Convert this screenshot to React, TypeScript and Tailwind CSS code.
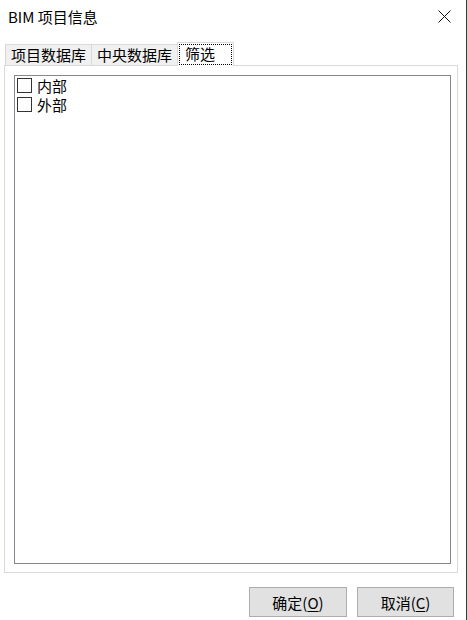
import React from "react";

const font = { fontFamily: '"Noto Sans CJK SC", "Noto Sans", sans-serif' };

function Checkbox({ label }: { label: string }) {
  return (
    <label className="flex items-center h-[19px] pl-[2px]">
      <span className="w-[15px] h-[15px] border border-[#333333] bg-white shrink-0" />
      <span className="ml-[5px] text-[15px] leading-none text-[#000]">{label}</span>
    </label>
  );
}

export default function App() {
  const tabs = ["项目数据库", "中央数据库", "筛选"];
  const active = 2;

  return (
    <div
      className="w-[467px] h-[620px] bg-white border-r border-[#3a3a3a] flex flex-col overflow-hidden select-none"
      style={font}
    >
      {/* title bar */}
      <div className="h-[32px] flex items-center justify-between pl-[8px] pr-[15px]">
        <span className="text-[15px] text-black leading-none">BIM 项目信息</span>
        <svg width="13" height="13" viewBox="0 0 13 13">
          <path d="M0.5 0.5 L12.5 12.5 M12.5 0.5 L0.5 12.5" stroke="#111" strokeWidth="1" />
        </svg>
      </div>

      {/* tabs */}
      <div className="mt-[10px] pl-[5px] h-[23px] flex items-end">
        {tabs.map((t, i) =>
          i === active ? (
            <div
              key={t}
              className="relative z-10 h-[24px] -mb-px w-[57px] -ml-px bg-white border border-b-0 border-[#d9d9d9] flex items-start pt-[1px] px-[1px]"
            >
              <span className="w-full h-[21px] border border-dotted border-black flex items-center pl-[5px] pb-[2px] text-[15px] leading-none text-black">
                {t}
              </span>
            </div>
          ) : (
            <div
              key={t}
              className={`h-[21px] w-[87px] bg-[#f0f0f0] border border-b-0 border-[#d9d9d9] flex items-center justify-center pb-[1px] text-[15px] leading-none text-black ${
                i > 0 ? "-ml-px" : ""
              }`}
            >
              {t}
            </div>
          )
        )}
      </div>

      {/* tab panel */}
      <div className="ml-[4px] w-[454px] h-[508px] border border-[#d9d9d9] pt-[9px] pl-[9px] pr-[6px] pb-[8px]">
        <div className="w-full h-full border border-[#828790]">
          <Checkbox label="内部" />
          <Checkbox label="外部" />
        </div>
      </div>

      {/* buttons */}
      <div className="mt-[14px] pl-[249px] flex gap-[10px]">
        <button className="w-[98px] h-[30px] bg-[#e1e1e1] border border-[#adadad] text-[15px] leading-none text-black flex items-center justify-center">
          确定(<span className="underline underline-offset-2">O</span>)
        </button>
        <button className="w-[97px] h-[30px] bg-[#e1e1e1] border border-[#adadad] text-[15px] leading-none text-black flex items-center justify-center">
          取消(<span className="underline underline-offset-2">C</span>)
        </button>
      </div>
    </div>
  );
}
